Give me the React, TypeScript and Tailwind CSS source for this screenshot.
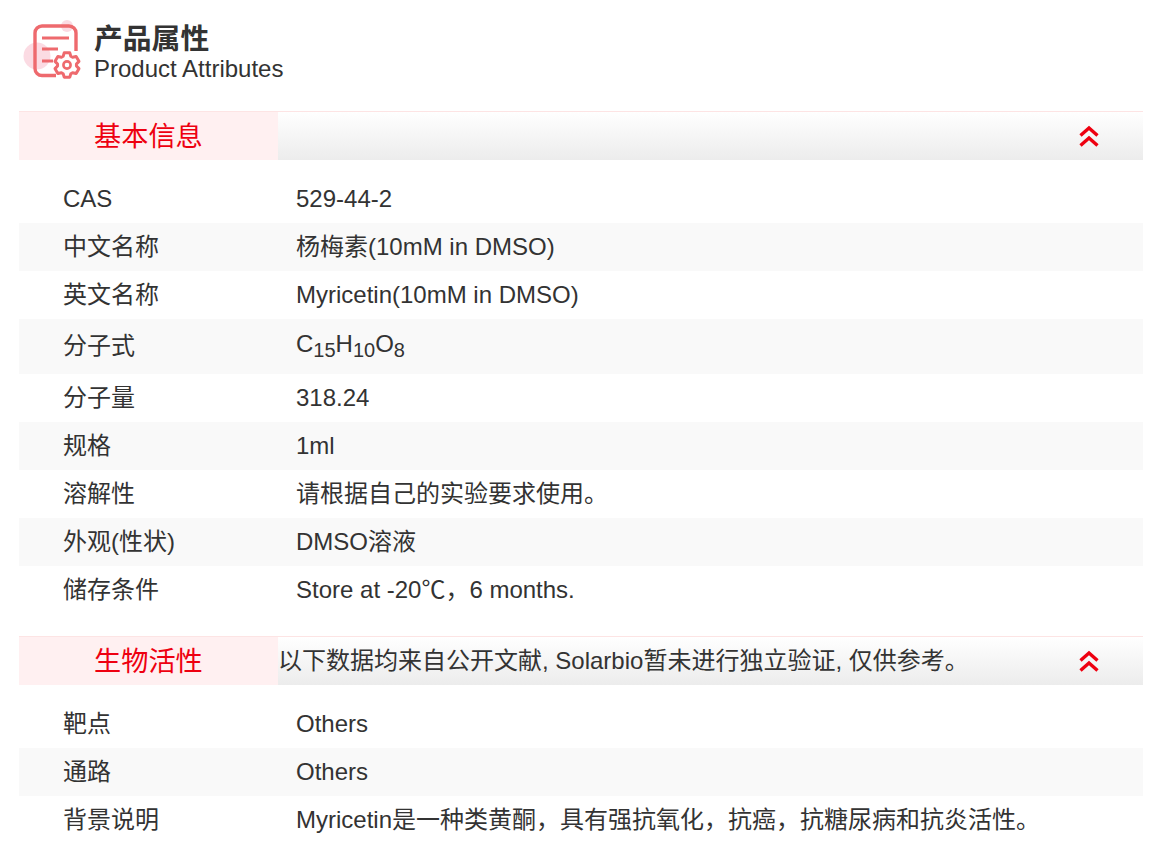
import type { ReactNode } from 'react';

type Row = { label: string; value: ReactNode; tall?: boolean };

const basicRows: Row[] = [
  { label: 'CAS', value: '529-44-2' },
  { label: '中文名称', value: '杨梅素(10mM in DMSO)' },
  { label: '英文名称', value: 'Myricetin(10mM in DMSO)' },
  {
    label: '分子式',
    tall: true,
    value: (
      <span className="inline-block pb-[4px]">
        C<sub className="text-[20px]">15</sub>H<sub className="text-[20px]">10</sub>O<sub className="text-[20px]">8</sub>
      </span>
    ),
  },
  { label: '分子量', value: '318.24' },
  { label: '规格', value: '1ml' },
  { label: '溶解性', value: '请根据自己的实验要求使用。' },
  { label: '外观(性状)', value: 'DMSO溶液' },
  { label: '储存条件', value: 'Store at -20℃，6 months.' },
];

const bioRows: Row[] = [
  { label: '靶点', value: 'Others' },
  { label: '通路', value: 'Others' },
  { label: '背景说明', value: 'Myricetin是一种类黄酮，具有强抗氧化，抗癌，抗糖尿病和抗炎活性。' },
];

// 6 tooth gear outline for the header icon
function gearPoints(cx: number, cy: number, outer: number, inner: number) {
  const pts: string[] = [];
  for (let i = 0; i < 6; i++) {
    const a = i * 60 - 90;
    [
      [a - 13, outer],
      [a + 13, outer],
      [a + 24, inner],
      [a + 36, inner],
    ].forEach(([deg, r]) => {
      const rad = (deg * Math.PI) / 180;
      pts.push(`${(cx + r * Math.cos(rad)).toFixed(2)},${(cy + r * Math.sin(rad)).toFixed(2)}`);
    });
  }
  return pts.join(' ');
}

function DoubleUp() {
  return (
    <svg width="20" height="22" viewBox="0 0 20 22" fill="none" stroke="#ee0010" strokeWidth="3.4">
      <path d="M1.5 10.5 L10 3 L18.5 10.5" />
      <path d="M1.5 20.5 L10 13 L18.5 20.5" />
    </svg>
  );
}

function SectionBar({ title, note }: { title: string; note?: string }) {
  return (
    <div className="flex h-[49px] border-t border-[#fde4e4]">
      <div className="w-[259px] shrink-0 bg-[#fff0f1] pl-[75px] text-[27.2px] leading-[49px] text-[#ee0010]">{title}</div>
      <div className="flex flex-1 items-center bg-gradient-to-b from-white to-[#ececec]">
        <div className="flex-1 text-[24px] text-[#333]">{note}</div>
        <div className="mr-[44px] flex">
          <DoubleUp />
        </div>
      </div>
    </div>
  );
}

function AttrTable({ rows }: { rows: Row[] }) {
  return (
    <div className="pt-[15px]">
      {rows.map((row, i) => (
        <div
          key={row.label}
          className={`flex items-center text-[24px] text-[#333] ${row.tall ? 'h-[55px] pb-[1px]' : 'h-[48px]'} ${
            i % 2 === 1 ? 'bg-[#f9f9f9]' : ''
          }`}
        >
          <div className="w-[277px] shrink-0 pl-[44px]">{row.label}</div>
          <div>{row.value}</div>
        </div>
      ))}
    </div>
  );
}

export default function App() {
  return (
    <div className="w-[1149px] pl-[19px] pr-[6px] pt-[21px] font-['Liberation_Sans','Noto_Sans_CJK_SC',sans-serif] text-[#333]">
      <div className="flex h-[90px] items-start pl-[11px]">
        <svg width="53" height="62" viewBox="0 0 53 62" fill="none" className="mr-[11px] shrink-0 overflow-visible blur-[0.4px]">
          <circle cx="37" cy="5" r="6" fill="#fbdbe3" />
          <circle cx="7" cy="35" r="13.5" fill="#fbdbe3" />
          <path
            d="M26 54.5 H12 a7 7 0 0 1 -7 -7 V12 a7 7 0 0 1 7 -7 H39 a7 7 0 0 1 7 7 V30"
            stroke="#ee6a6e"
            strokeWidth="3.4"
          />
          <path d="M12 17 H39 M12 28 H28 M12 40 H23" stroke="#ee6a6e" strokeWidth="3" />
          <polygon
            points={gearPoints(37, 44, 12.5, 9.5)}
            stroke="#ee6a6e"
            strokeWidth="3"
            fill="#fff"
            strokeLinejoin="round"
          />
          <circle cx="37" cy="44" r="3.6" stroke="#ee6a6e" strokeWidth="2.6" />
        </svg>
        <div>
          <div className="text-[28.8px] font-bold leading-[36px]">产品属性</div>
          <div className="text-[24px] leading-[24px]">Product Attributes</div>
        </div>
      </div>
      <SectionBar title="基本信息" />
      <AttrTable rows={basicRows} />
      <div className="h-[22px]" />
      <SectionBar title="生物活性" note="以下数据均来自公开文献, Solarbio暂未进行独立验证, 仅供参考。" />
      <AttrTable rows={bioRows} />
    </div>
  );
}
